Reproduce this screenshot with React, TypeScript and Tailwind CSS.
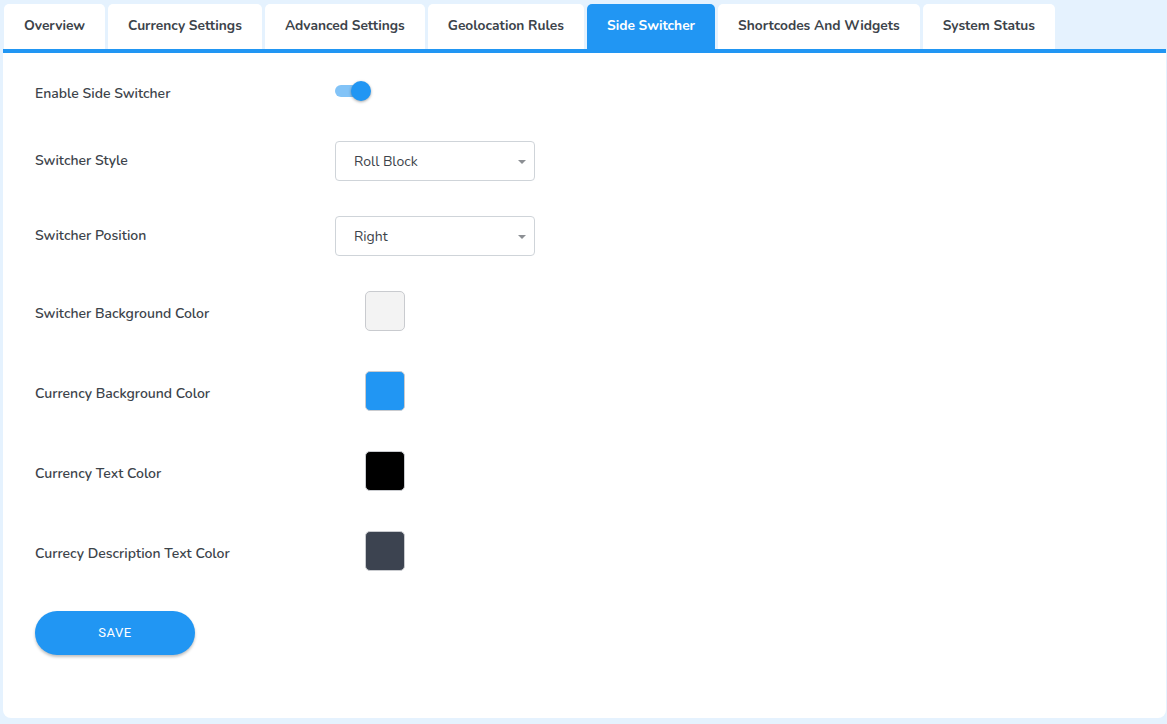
const tabs = [
  "Overview",
  "Currency Settings",
  "Advanced Settings",
  "Geolocation Rules",
  "Side Switcher",
  "Shortcodes And Widgets",
  "System Status",
];

function Select({ value }: { value: string }) {
  return (
    <div className="relative flex h-[40px] w-[200px] items-center rounded-[4px] border border-[#cfd4d9] bg-white pl-[18px] text-[14px] text-[#3c434a]">
      {value}
      <span className="absolute right-[8px] top-[18px] h-0 w-0 border-x-[4px] border-t-[4px] border-x-transparent border-t-[#8c8f94]"></span>
    </div>
  );
}

function Swatch({ color }: { color: string }) {
  return (
    <div className="ml-[30px] h-[40px] w-[40px] rounded-[5px] border border-[#c9cbcf]" style={{ backgroundColor: color }}></div>
  );
}

function Row({ label, children, className, labelClass }: { label: string; children: React.ReactNode; className?: string; labelClass?: string }) {
  return (
    <div className={"flex h-[40px] items-center " + (className ?? "")}>
      <div className={"w-[300px] text-[14px] font-semibold text-[#3c434a] " + (labelClass ?? "pt-[4px]")}>{label}</div>
      {children}
    </div>
  );
}

export default function App() {
  return (
    <div className="h-[724px] w-[1167px] bg-[#e5f2fe] pt-[4px] pl-[3px] font-['Nunito','Lato',sans-serif]">
      {/* Tabs */}
      <div className="flex gap-[3px] pl-[1px]">
        {tabs.map((t) => (
          <div
            key={t}
            className={
              "flex h-[45px] items-center rounded-t-[5px] px-[20px] text-[13.75px] font-bold " +
              (t === "Side Switcher" ? "bg-[#2196f3] text-white" : "bg-white text-[#3c434a]")
            }
          >
            {t}
          </div>
        ))}
      </div>

      {/* Panel */}
      <div className="w-[1163px] h-[669px] rounded-b-[8px] border-t-[4px] border-[#2196f3] bg-white px-[32px] pt-[18px]">
        <Row label="Enable Side Switcher" labelClass="pt-[4px]">
          <div className="relative h-[12px] w-[30px] rounded-full bg-[#82c3f7]">
            <span className="absolute right-[-6px] top-[-4px] h-[20px] w-[20px] rounded-full bg-[#2196f3] shadow-[0_1px_3px_rgba(0,0,0,0.35)]"></span>
          </div>
        </Row>
        <Row label="Switcher Style" className="mt-[30px]" labelClass="pb-[2px]">
          <Select value="Roll Block" />
        </Row>
        <Row label="Switcher Position" className="mt-[35px]" labelClass="pb-[2px]">
          <Select value="Right" />
        </Row>
        <Row label="Switcher Background Color" className="mt-[35px]" labelClass="pt-[5px]">
          <Swatch color="#f3f3f3" />
        </Row>
        <Row label="Currency Background Color" className="mt-[40px]" labelClass="pt-[5px]">
          <Swatch color="#2196f3" />
        </Row>
        <Row label="Currency Text Color" className="mt-[40px]" labelClass="pt-[5px]">
          <Swatch color="#000000" />
        </Row>
        <Row label="Currecy Description Text Color" className="mt-[40px]" labelClass="pt-[5px]">
          <Swatch color="#3c4350" />
        </Row>
        <button className="mt-[40px] h-[44px] w-[160px] rounded-full bg-[#2196f3] font-['Roboto',sans-serif] text-[13px] font-normal tracking-[0.6px] text-white shadow-[0_2px_3px_rgba(0,0,0,0.25)]">
          SAVE
        </button>
      </div>
    </div>
  );
}
